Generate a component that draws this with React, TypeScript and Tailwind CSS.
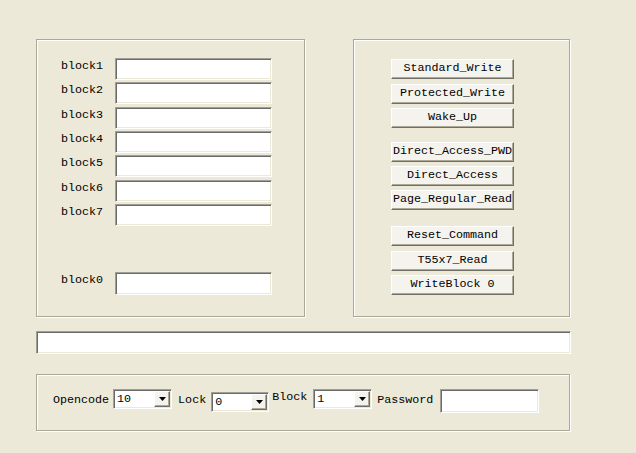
import React from 'react'

const sunken =
  'bg-white border border-t-[#a09e96] border-l-[#a09e96] border-b-white border-r-white shadow-[inset_1px_1px_0_#6b6b6b,inset_-1px_-1px_0_#ece9d8]'
const raised =
  'bg-[#f4f3ee] border border-t-white border-l-white border-b-[#716f64] border-r-[#716f64] shadow-[inset_-1px_-1px_0_#aca899]'
const group = 'border border-[#aca899] shadow-[inset_1px_1px_0_#ffffff,1px_1px_0_#ffffff]'

const Field = ({ className = '' }: { className?: string }) => <div className={`${sunken} ${className}`} />

const Btn = ({ label, className = '' }: { label: string; className?: string }) => (
  <div className={`${raised} w-[123px] h-[20px] flex items-center justify-center leading-none ${className}`}>
    {label}
  </div>
)

const Combo = ({ value, className = '' }: { value: string; className?: string }) => (
  <div className={`${sunken} h-[20px] flex items-center justify-between pl-[3px] pr-[1px] ${className}`}>
    <span className="leading-none pt-[1px]">{value}</span>
    <div className={`${raised} w-[16px] h-[16px] flex items-center justify-center`}>
      <svg width="7" height="4" viewBox="0 0 7 4">
        <polygon points="0,0 7,0 3.5,4" fill="#000" />
      </svg>
    </div>
  </div>
)

const App = () => {
  const blocks = ['block1', 'block2', 'block3', 'block4', 'block5', 'block6', 'block7']
  return (
    <div className="w-[636px] h-[453px] bg-[#ece9d8] pt-[39px] pl-[36px] text-black text-[11.7px] font-['Liberation_Mono','DejaVu_Sans_Mono',monospace]">
      <div className="flex gap-[48px]">
        {/* left: block fields */}
        <div className={`${group} w-[269px] h-[278px] pt-[18px] pl-[24px]`}>
          <div className="flex flex-col gap-[2.35px]">
            {blocks.map((b) => (
              <div key={b} className="flex items-start">
                <span className="w-[54px] leading-[14px] pt-[1px]">{b}</span>
                <Field className="w-[157px] h-[22px]" />
              </div>
            ))}
          </div>
          <div className="flex items-start mt-[46px]">
            <span className="w-[54px] leading-[14px] pt-[1px]">block0</span>
            <Field className="w-[157px] h-[23px]" />
          </div>
        </div>

        {/* right: commands */}
        <div className={`${group} w-[217px] h-[278px] pt-[19px] pl-[37px] flex flex-col`}>
          <Btn label="Standard_Write" />
          <Btn label="Protected_Write" className="mt-[4.5px]" />
          <Btn label="Wake_Up" className="mt-[4.5px]" />
          <Btn label="Direct_Access_PWD" className="mt-[14px]" />
          <Btn label="Direct_Access" className="mt-[3.5px]" />
          <Btn label="Page_Regular_Read" className="mt-[4px]" />
          <Btn label="Reset_Command" className="mt-[16px]" />
          <Btn label="T55x7_Read" className="mt-[5px]" />
          <Btn label="WriteBlock 0" className="mt-[4px]" />
        </div>
      </div>

      <Field className="mt-[14px] w-[535px] h-[23px]" />

      <div className={`${group} mt-[20px] w-[534px] h-[57px] pt-[14px] pl-[16px] flex items-start`}>
        <span className="mt-[4px] leading-[14px]">Opencode</span>
        <Combo value="10" className="ml-[4px] w-[59px]" />
        <span className="ml-[6px] mt-[4px] leading-[14px]">Lock</span>
        <Combo value="0" className="ml-[5px] mt-[3px] w-[58px]" />
        <span className="ml-[3px] mt-[1px] leading-[14px]">Block</span>
        <Combo value="1" className="ml-[6px] w-[59px]" />
        <span className="ml-[5px] mt-[4px] leading-[14px]">Password</span>
        <Field className="ml-[7px] w-[99px] h-[24px]" />
      </div>
    </div>
  )
}

export default App
